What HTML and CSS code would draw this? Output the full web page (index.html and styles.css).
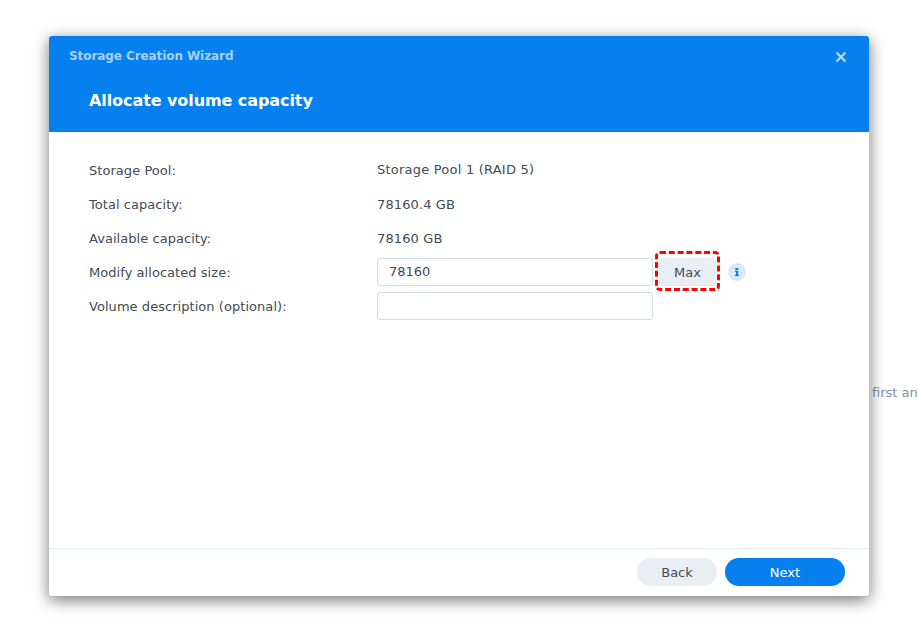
FILE: index.html
```html
<!DOCTYPE html>
<html lang="en">
<head>
<meta charset="utf-8">
<title>Storage Creation Wizard</title>
<link rel="stylesheet" href="styles.css">
</head>
<body>
<span class="behind">first an</span>
<div class="dialog">
  <header class="head">
    <div class="head-top">
      <span class="wizard">Storage Creation Wizard</span>
      <svg class="close" width="12" height="12" viewBox="0 0 12 12"><path d="M1.5 1.5l9 9M10.5 1.5l-9 9" stroke="#b5d8fb" stroke-width="2.2" fill="none"/></svg>
    </div>
    <h1 class="title">Allocate volume capacity</h1>
  </header>
  <main class="body">
    <div class="row"><span class="label">Storage Pool:</span><span class="value up">Storage Pool 1 (RAID 5)</span></div>
    <div class="row"><span class="label">Total capacity:</span><span class="value">78160.4 GB</span></div>
    <div class="row"><span class="label">Available capacity:</span><span class="value">78160 GB</span></div>
    <div class="row">
      <span class="label">Modify allocated size:</span>
      <div class="field">78160</div>
      <div class="max-wrap"><button class="max">Max</button></div>
      <svg class="info" width="18" height="18" viewBox="0 0 18 18"><circle cx="9" cy="9" r="9" fill="#d6e9fc"/><path d="M7.5 5.2h3v2h-3zM7.3 8h3v4h1v1.4H7.2V12h1V9.4h-.9z" fill="#0680ee" transform="translate(-.2 -.3)"/></svg>
    </div>
    <div class="row"><span class="label">Volume description (optional):</span><div class="field"></div></div>
  </main>
  <footer class="foot">
    <button class="btn back">Back</button>
    <button class="btn next">Next</button>
  </footer>
</div>
</body>
</html>
```

FILE: styles.css
```css
html, body { margin: 0; height: 100%; background: #fff; overflow: hidden; }
body { position: relative; font-family: "DejaVu Sans", sans-serif; font-size: 13px; color: #414b55; padding: 36px 0 0 49px; box-sizing: border-box; }
.behind { position: absolute; left: 872px; top: 385px; color: #7d8fa3; white-space: nowrap; }
.dialog { position: relative; width: 820px; height: 560px; background: #fff; border-radius: 3px; display: flex; flex-direction: column; box-shadow: 0 4px 16px rgba(0,0,0,.55); }
.head { height: 96px; background: #0680ee; border-radius: 3px 3px 0 0; color: #fff; flex: none; }
.head-top { display: flex; justify-content: space-between; align-items: center; height: 39px; padding: 0 22px 0 20px; }
.wizard { font-weight: 700; font-size: 12px; color: #a9d0f8; letter-spacing: -.08px; }
.close { display: block; margin-top: 2px; }
.title { margin: 6px 0 0 40px; font-size: 16px; font-weight: 700; line-height: 40px; letter-spacing: -.08px; }
.body { flex: 1; padding: 21px 40px 0; }
.row { display: flex; align-items: center; height: 34px; }
.label { width: 288px; flex: none; letter-spacing: .05px; }
.value { letter-spacing: .12px; }
.value.up { position: relative; top: -1px; letter-spacing: .22px; }
.field { box-sizing: border-box; width: 276px; height: 28px; line-height: 26px; border: 1px solid #d2dde8; border-radius: 3px; padding-left: 11px; color: #414b55; }
.max-wrap { box-sizing: border-box; width: 65px; height: 40px; margin: 0 8px 2px 2px; padding: 4px 1px 2px 1px; border: 3px dashed #ff0000; border-radius: 5px; display: flex; flex: none; background: #fff; }
.max { width: 100%; height: 100%; border: 0; background: #e9eef5; border-radius: 3px; font: inherit; color: #414b55; padding: 0; }
.info { display: block; flex: none; }
.foot { box-sizing: border-box; height: 48px; border-top: 1px solid #e1e8ef; display: flex; justify-content: flex-end; align-items: flex-start; gap: 8px; padding: 9px 24px 0 0; flex: none; }
.btn { height: 28px; border: 0; border-radius: 14px; font: inherit; padding: 0; }
.back { width: 80px; background: #e9eef5; color: #414b55; }
.next { width: 120px; background: #0680ee; color: #fff; }
```
